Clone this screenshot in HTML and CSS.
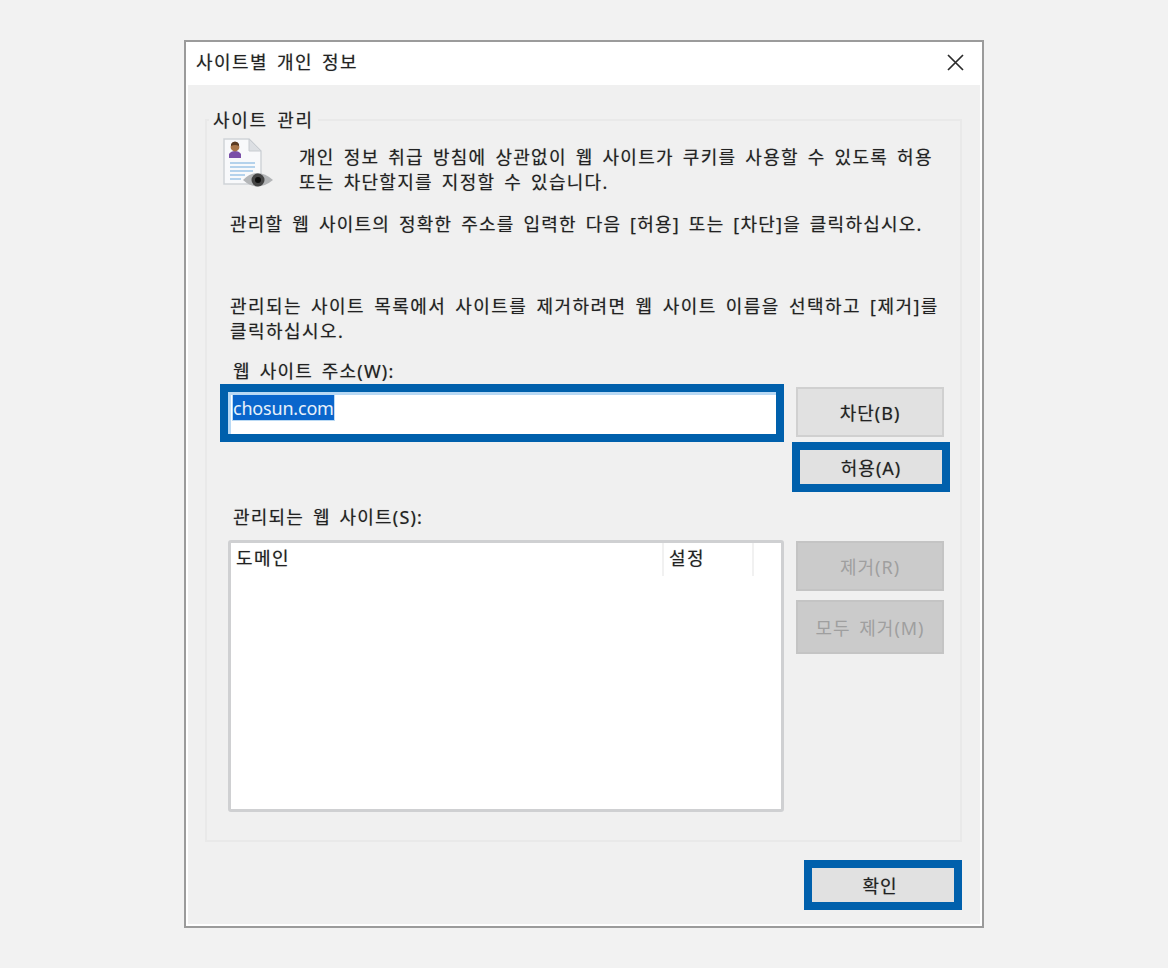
FILE: index.html
```html
<!DOCTYPE html>
<html lang="ko">
<head>
<meta charset="utf-8">
<title>사이트별 개인 정보</title>
<link rel="stylesheet" href="styles.css">
</head>
<body>
<div class="dialog">
  <header class="titlebar">
    <span class="title">사이트별 개인 정보</span>
    <svg class="close" width="17" height="17" viewBox="0 0 17 17"><path d="M1 1L16 16M16 1L1 16" stroke="#2b2b2b" stroke-width="1.7" fill="none"/></svg>
  </header>
  <div class="body">
    <fieldset class="group">
      <legend class="legend">사이트 관리</legend>
      <div class="intro">
        <svg class="doc" width="50" height="50" viewBox="0 0 50 50">
          <path d="M1 1H26L38 13V46H1Z" fill="#f8f9fb" stroke="#cfd3d8" stroke-width="1.5"/>
          <path d="M26 1V13H38Z" fill="#dcdfe3" stroke="#c8ccd1"/>
          <path d="M6 20v-4q2-3 6-3t6 3v4z" fill="#7a4fa8"/>
          <circle cx="12" cy="9" r="4.4" fill="#a8754a"/>
          <path d="M8 8V6q1-2.500 4-2.500t4 2.500v2q-4-2-8 0z" fill="#5a3a22"/>
          <path d="M7 25H32M7 29H32M7 33H30M7 37H22M7 41H18" stroke="#b4d2ec" stroke-width="2.200"/>
          <path d="M20 42Q34 28 50 42Q34 55 20 42Z" fill="#b3b5b7"/>
          <circle cx="35" cy="42" r="6.500" fill="#444"/>
          <circle cx="35" cy="42" r="3" fill="#0e0e0e"/>
        </svg>
        <p class="intro-text">개인 정보 취급 방침에 상관없이 웹 사이트가 쿠키를 사용할 수 있도록 허용<br>또는 차단할지를 지정할 수 있습니다.</p>
      </div>
      <p class="para para-enter">관리할 웹 사이트의 정확한 주소를 입력한 다음 [허용] 또는 [차단]을 클릭하십시오.</p>
      <p class="para para-remove">관리되는 사이트 목록에서 사이트를 제거하려면 웹 사이트 이름을 선택하고 [제거]를<br>클릭하십시오.</p>
      <div class="form">
        <div class="left">
          <div class="label">웹 사이트 주소(W):</div>
          <div class="input"><span class="selected">chosun.com</span></div>
          <div class="label label-list">관리되는 웹 사이트(S):</div>
          <div class="list">
            <div class="list-head">
              <span class="col col-domain">도메인</span>
              <span class="col col-setting">설정</span>
              <span class="col col-rest"></span>
            </div>
          </div>
        </div>
        <div class="right">
          <div class="btn btn-block">차단(B)</div>
          <div class="btn btn-allow hl">허용(A)</div>
          <div class="btn off btn-remove">제거(R)</div>
          <div class="btn off btn-removeall">모두 제거(M)</div>
        </div>
      </div>
    </fieldset>
    <div class="footer">
      <div class="btn hl btn-ok">확인</div>
    </div>
  </div>
</div>
</body>
</html>
```
FILE: styles.css
```css
* { box-sizing: border-box; }
html, body { margin: 0; padding: 0; }
body {
  background: #f2f2f2;
  width: 1168px;
  height: 968px;
  padding-top: 40px;
  font-family: "Noto Sans", "Noto Sans CJK KR", sans-serif;
  font-size: 18px;
  letter-spacing: 1.4px;
  word-spacing: 3px;
  color: #222;
  text-shadow: 0 0 1px rgba(0, 0, 0, 0.35);
  overflow: hidden;
}
.dialog {
  width: 800px;
  height: 888px;
  margin: 0 auto;
  background: #fff;
  border: 2px solid #9b9b9b;
  display: flex;
  flex-direction: column;
}
.titlebar {
  height: 43px;
  flex: none;
  display: flex;
  align-items: center;
  justify-content: space-between;
  padding: 0 18px 4px 10px;
}
.title { line-height: 24px; }
.close { flex: none; margin-top: 2px; }
.body {
  flex: 1;
  margin: 0 2px 2px 2px;
  background: #f0f0f0;
  display: flex;
  flex-direction: column;
}
.group {
  margin: 23px 18px 0 17px;
  padding: 6px 0 0 13px;
  height: 734px;
  border: 2px solid #e9e9e9;
  min-width: 0;
}
.legend {
  margin-left: -11px;
  padding: 0 4px 0 4px;
  line-height: 24px;
  background: #f0f0f0;
  letter-spacing: 1.7px;
}
.intro { display: flex; margin-left: 3px; height: 57px; }
.doc { flex: none; }
.intro-text { margin: 7px 0 0 26px; line-height: 25px; white-space: nowrap; letter-spacing: 1.28px; }
.para { margin: 0 0 0 10px; line-height: 25px; white-space: nowrap; }
.para-enter { margin-top: 17px; letter-spacing: 1.22px; }
.para-remove { margin-top: 57px; letter-spacing: 1.44px; }
.form {
  display: grid;
  grid-template-columns: 564px 148px;
  column-gap: 12px;
  margin-top: 15px;
}
.left, .right { display: flex; flex-direction: column; }
.label { margin-left: 13px; line-height: 25px; height: 25px; white-space: nowrap; letter-spacing: 1.2px; }
.input {
  height: 58px;
  margin-top: 0;
  border: 8px solid #0060ac;
  background: #fff;
  box-shadow: inset 3px 3px 0 #b9d9f4;
  padding: 3px 0 0 5px;
}
.selected {
  display: inline-block;
  height: 25px;
  line-height: 27px;
  background: #0a66cc;
  color: #e8f1fb;
  letter-spacing: -0.2px;
  text-shadow: none;
  box-shadow: 0 0 0 1px #b9d9f4;
}
.label-list { margin-top: 63px; }
.list {
  height: 272px;
  margin: 10px 0 0 8px;
  background: #fff;
  border: 3px solid #cfd0d2;
  border-radius: 3px;
}
.list-head { display: flex; height: 33px; }
.col { line-height: 30px; padding-left: 5px; white-space: nowrap; }
.col-domain { width: 433px; border-right: 2px solid #f1f1f1; }
.col-setting { width: 90px; border-right: 2px solid #f1f1f1; }
.col-rest { flex: 1; }
.right { padding-top: 28px; }
.btn {
  height: 50px;
  display: flex;
  align-items: center;
  justify-content: center;
  background: #e1e1e1;
  border: 2px solid #d0d0d0;
  white-space: nowrap;
  letter-spacing: 1px;
}
.hl { border: 8px solid #0060ac; }
.btn-allow { margin: 5px -6px 0 -4px; }
.off { background: #cbcbcb; border-color: #c4c4c4; color: #9f9f9f; text-shadow: none; }
.btn-remove { margin-top: 49px; }
.btn-removeall { margin-top: 9px; height: 54px; }
.footer {
  margin: 18px 18px 0 0;
  display: flex;
  justify-content: flex-end;
}
.btn-ok { width: 158px; padding-right: 6px; }
```
